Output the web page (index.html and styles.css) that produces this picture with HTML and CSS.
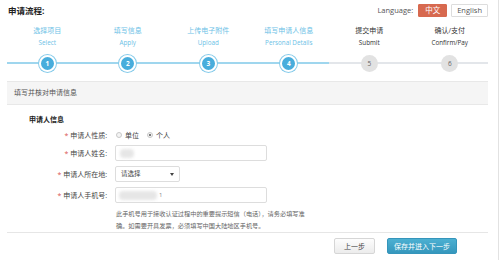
FILE: index.html
```html
<!DOCTYPE html>
<html lang="zh-CN">
<head>
    <meta charset="UTF-8">
    <title>申请流程</title>
    <link rel="stylesheet" href="styles.css">
</head>
<body>
    <div class="page">
        <div class="top-bar">
            <h1 class="title">申请流程:</h1>
            <div class="lang">
                <span class="lang-label">Language:</span>
                <a class="lang-btn active">中文</a>
                <a class="lang-btn">English</a>
            </div>
        </div>

        <!-- Steps -->
        <ol class="steps">
            <li class="step done">
                <span class="step-cn">选择项目</span>
                <span class="step-en">Select</span>
                <span class="step-dot">1</span>
            </li>
            <li class="step done">
                <span class="step-cn">填写信息</span>
                <span class="step-en">Apply</span>
                <span class="step-dot">2</span>
            </li>
            <li class="step done">
                <span class="step-cn">上传电子附件</span>
                <span class="step-en">Upload</span>
                <span class="step-dot">3</span>
            </li>
            <li class="step done">
                <span class="step-cn">填写申请人信息</span>
                <span class="step-en">Personal Details</span>
                <span class="step-dot">4</span>
            </li>
            <li class="step">
                <span class="step-cn">提交申请</span>
                <span class="step-en">Submit</span>
                <span class="step-dot">5</span>
            </li>
            <li class="step">
                <span class="step-cn">确认/支付</span>
                <span class="step-en">Confirm/Pay</span>
                <span class="step-dot">6</span>
            </li>
        </ol>

        <div class="panel">
            <div class="panel-head">填写并核对申请信息</div>
            <div class="panel-body">
                <h3 class="section-title">申请人信息</h3>

                <div class="form-row">
                    <label class="form-label"><em>*</em> 申请人性质:</label>
                    <div class="form-field radios">
                        <label class="radio"><span class="radio-dot"></span>单位</label>
                        <label class="radio"><span class="radio-dot checked"></span>个人</label>
                    </div>
                </div>

                <div class="form-row">
                    <label class="form-label"><em>*</em> 申请人姓名:</label>
                    <div class="form-field">
                        <div class="input"><span class="blur blur-name"></span></div>
                    </div>
                </div>

                <div class="form-row">
                    <label class="form-label"><em>*</em> 申请人所在地:</label>
                    <div class="form-field">
                        <div class="select">请选择<span class="caret"></span></div>
                    </div>
                </div>

                <div class="form-row">
                    <label class="form-label"><em>*</em> 申请人手机号:</label>
                    <div class="form-field">
                        <div class="input"><span class="blur blur-phone"></span><span class="digit">1</span></div>
                    </div>
                </div>

                <p class="help">此手机号用于接收认证过程中的重要提示短信（电话），请务必填写准确。如需要开具发票，必须填写中国大陆地区手机号。</p>
            </div>

            <div class="actions">
                <button class="btn">上一步</button>
                <button class="btn primary">保存并进入下一步</button>
            </div>
        </div>
    </div>
</body>
</html>
```

FILE: styles.css
```css
* {
    box-sizing: border-box;
    margin: 0;
    padding: 0;
}

body {
    background-color: #fff;
    color: #333;
    font-family: "Open Sans", "Noto Sans CJK SC", sans-serif;
    font-size: 7px;
}

.page {
    width: 499px;
    height: 260px;
    border-right: 1px solid #e2e2e2;
    padding: 0 10px 0 7px;
}

/* top bar */
.top-bar {
    display: flex;
    justify-content: space-between;
    align-items: center;
    height: 19px;
    padding-left: 1px;
}

.title {
    font-size: 8.5px;
    font-weight: bold;
    color: #222;
}

.lang {
    display: flex;
    align-items: center;
    gap: 4px;
    padding-top: 1px;
}

.lang-label {
    color: #555;
    font-size: 7.5px;
    margin-right: 1px;
}

.lang-btn {
    display: inline-block;
    height: 13px;
    line-height: 11px;
    padding: 0 5px;
    border: 1px solid #ddd;
    border-radius: 1px;
    color: #555;
    font-size: 7.5px;
    background: #fff;
}

.lang-btn.active {
    background: #d7694f;
    border-color: #d7694f;
    color: #fff;
    padding: 0 6px;
}

/* steps */
.steps {
    list-style: none;
    display: grid;
    grid-template-columns: repeat(6, 1fr);
    width: 483px;
    padding-top: 7px;
}

.step {
    position: relative;
    display: flex;
    flex-direction: column;
    align-items: center;
    color: #333;
}

.step::before {
    content: "";
    position: absolute;
    left: 0;
    right: 0;
    top: 36px;
    height: 2px;
    background: #e3e6ea;
}

.step:last-child::before {
    right: 2px;
}

.step.done::before {
    background: #9fd6ee;
}

.step-cn {
    font-size: 7px;
    line-height: 10px;
}

.step-en {
    font-size: 6.3px;
    line-height: 10px;
    margin-top: 2px;
}

.step.done .step-cn,
.step.done .step-en {
    color: #6cc1e6;
}

.step-dot {
    position: relative;
    z-index: 1;
    width: 17px;
    height: 17px;
    margin-top: 7px;
    border-radius: 50%;
    background: #e2e2e2;
    color: #666;
    font-size: 6.5px;
    line-height: 17px;
    text-align: center;
}

.step.done .step-dot {
    background: #48addc;
    color: #fff;
    border: 2px solid #fff;
    box-shadow: 0 0 0 1px #86cbea;
    line-height: 13px;
    font-weight: bold;
}

/* panel */
.panel {
    margin-top: 9px;
    width: 481px;
}

.panel-head {
    height: 24px;
    line-height: 22px;
    padding-left: 7px;
    background: #f5f5f5;
    border-top: 1px solid #e8e8e8;
    border-bottom: 1px solid #e8e8e8;
    color: #555;
    font-size: 7px;
}

.panel-body {
    padding: 9px 0 0 22px;
    border-bottom: 1px solid #e6e6e6;
}

.section-title {
    font-size: 7px;
    font-weight: bold;
    color: #222;
    margin-bottom: 4px;
}

.form-row {
    display: flex;
    align-items: center;
    margin-bottom: 5px;
}

.form-row:first-of-type {
    margin-bottom: 3px;
}

.form-label {
    width: 78px;
    text-align: right;
    color: #444;
    font-size: 7px;
}

.form-label em {
    font-style: normal;
    color: #d9534f;
}

.form-field {
    margin-left: 8px;
}

.radios {
    display: flex;
    gap: 8px;
    height: 14px;
    align-items: center;
    margin-left: 9px;
}

.radio {
    display: flex;
    align-items: center;
    gap: 3px;
    color: #444;
}

.radio-dot {
    width: 6px;
    height: 6px;
    border-radius: 50%;
    border: 1px solid #c8c8c8;
    background: #f4f4f4;
    position: relative;
}

.radio-dot.checked::after {
    content: "";
    position: absolute;
    left: 1px;
    top: 1px;
    width: 2px;
    height: 2px;
    border-radius: 50%;
    background: #555;
}

.input {
    display: flex;
    align-items: center;
    width: 152px;
    height: 16px;
    border: 1px solid #ddd;
    border-radius: 2px;
    padding-left: 3px;
    background: #fff;
}

.blur {
    display: inline-block;
    height: 9px;
    border-radius: 4px;
    background: #e6e6e6;
    filter: blur(1.5px);
}

.blur-name {
    width: 14px;
    margin-left: 1px;
}

.blur-phone {
    width: 38px;
}

.digit {
    color: #888;
    font-size: 6px;
    margin-left: 2px;
}

.select {
    position: relative;
    width: 65px;
    height: 16px;
    line-height: 14px;
    border: 1px solid #ddd;
    border-radius: 2px;
    padding-left: 5px;
    color: #444;
    font-size: 6.5px;
    background: #fff;
}

.caret {
    position: absolute;
    right: 5px;
    top: 6px;
    border-left: 2px solid transparent;
    border-right: 2px solid transparent;
    border-top: 3px solid #444;
}

.help {
    width: 198px;
    margin-left: 87px;
    margin-top: 0;
    color: #666;
    font-size: 6.2px;
    line-height: 12px;
}

/* actions */
.actions {
    display: flex;
    justify-content: flex-end;
    gap: 12px;
    padding: 5px 31px 0 0;
}

.btn {
    height: 16px;
    padding: 0 9px;
    border: 1px solid #d6d6d6;
    border-radius: 2px;
    background: linear-gradient(#fdfdfd, #ececec);
    color: #444;
    font-family: "Open Sans", "Noto Sans CJK SC", sans-serif;
    font-size: 7px;
}

.btn.primary {
    background: linear-gradient(#4cb0d2, #3597bd);
    border-color: #3595bb;
    color: #fff;
    padding: 0 6px;
}
```
